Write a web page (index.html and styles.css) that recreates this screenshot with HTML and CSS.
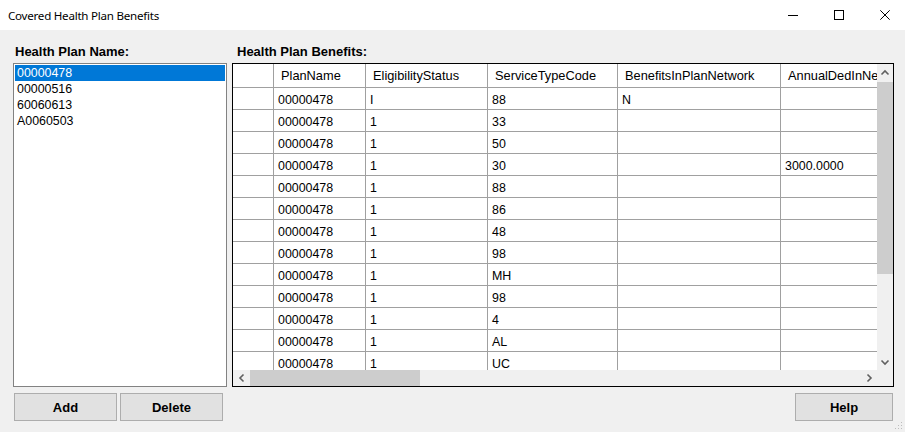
FILE: index.html
```html
<!DOCTYPE html>
<html>
<head>
<meta charset="utf-8">
<title>Covered Health Plan Benefits</title>
<link rel="stylesheet" href="styles.css">
</head>
<body>
<div class="window">
  <div class="titlebar">
    <span class="title">Covered Health Plan Benefits</span>
    <div class="controls">
      <span class="ctl"><svg width="10" height="10" viewBox="0 0 10 10"><line x1="0" y1="5.5" x2="10" y2="5.5" stroke="#000" stroke-width="1"/></svg></span>
      <span class="ctl"><svg width="10" height="10" viewBox="0 0 10 10"><rect x="0.5" y="0.5" width="9" height="9" fill="none" stroke="#000" stroke-width="1"/></svg></span>
      <span class="ctl"><svg width="10" height="10" viewBox="0 0 10 10"><path d="M0.3 0.3 L9.7 9.7 M9.7 0.3 L0.3 9.7" stroke="#000" stroke-width="1" fill="none"/></svg></span>
    </div>
  </div>
  <div class="main">
    <div class="col left">
      <div class="label">Health Plan Name:</div>
      <div class="listbox">
        <div class="item sel">00000478</div>
        <div class="item">00000516</div>
        <div class="item">60060613</div>
        <div class="item">A0060503</div>
      </div>
      <div class="btnrow">
        <button class="btn btn-wide">Add</button>
        <button class="btn btn-wide">Delete</button>
      </div>
    </div>
    <div class="col right">
      <div class="label label-grid">Health Plan Benefits:</div>
      <div class="grid">
        <div class="viewport">
          <div class="row head">
            <div class="cell c0"></div>
            <div class="cell c1">PlanName</div>
            <div class="cell c2">EligibilityStatus</div>
            <div class="cell c3">ServiceTypeCode</div>
            <div class="cell c4">BenefitsInPlanNetwork</div>
            <div class="cell c5">AnnualDedInNetwork</div>
          </div>
          <div class="row"><div class="cell c0"></div><div class="cell c1">00000478</div><div class="cell c2">I</div><div class="cell c3">88</div><div class="cell c4">N</div><div class="cell c5"></div></div>
          <div class="row"><div class="cell c0"></div><div class="cell c1">00000478</div><div class="cell c2">1</div><div class="cell c3">33</div><div class="cell c4"></div><div class="cell c5"></div></div>
          <div class="row"><div class="cell c0"></div><div class="cell c1">00000478</div><div class="cell c2">1</div><div class="cell c3">50</div><div class="cell c4"></div><div class="cell c5"></div></div>
          <div class="row"><div class="cell c0"></div><div class="cell c1">00000478</div><div class="cell c2">1</div><div class="cell c3">30</div><div class="cell c4"></div><div class="cell c5">3000.0000</div></div>
          <div class="row"><div class="cell c0"></div><div class="cell c1">00000478</div><div class="cell c2">1</div><div class="cell c3">88</div><div class="cell c4"></div><div class="cell c5"></div></div>
          <div class="row"><div class="cell c0"></div><div class="cell c1">00000478</div><div class="cell c2">1</div><div class="cell c3">86</div><div class="cell c4"></div><div class="cell c5"></div></div>
          <div class="row"><div class="cell c0"></div><div class="cell c1">00000478</div><div class="cell c2">1</div><div class="cell c3">48</div><div class="cell c4"></div><div class="cell c5"></div></div>
          <div class="row"><div class="cell c0"></div><div class="cell c1">00000478</div><div class="cell c2">1</div><div class="cell c3">98</div><div class="cell c4"></div><div class="cell c5"></div></div>
          <div class="row"><div class="cell c0"></div><div class="cell c1">00000478</div><div class="cell c2">1</div><div class="cell c3">MH</div><div class="cell c4"></div><div class="cell c5"></div></div>
          <div class="row"><div class="cell c0"></div><div class="cell c1">00000478</div><div class="cell c2">1</div><div class="cell c3">98</div><div class="cell c4"></div><div class="cell c5"></div></div>
          <div class="row"><div class="cell c0"></div><div class="cell c1">00000478</div><div class="cell c2">1</div><div class="cell c3">4</div><div class="cell c4"></div><div class="cell c5"></div></div>
          <div class="row"><div class="cell c0"></div><div class="cell c1">00000478</div><div class="cell c2">1</div><div class="cell c3">AL</div><div class="cell c4"></div><div class="cell c5"></div></div>
          <div class="row"><div class="cell c0"></div><div class="cell c1">00000478</div><div class="cell c2">1</div><div class="cell c3">UC</div><div class="cell c4"></div><div class="cell c5"></div></div>
        </div>
        <div class="vscroll">
          <div class="arrow arrow-v-top"><svg width="16" height="16" viewBox="0 0 16 16"><polyline points="4.5,9.5 8,6 11.5,9.5" fill="none" stroke="#606060" stroke-width="1.6"/></svg></div>
          <div class="vthumb"></div>
          <div class="vtrack"></div>
          <div class="arrow arrow-v-bottom"><svg width="16" height="16" viewBox="0 0 16 16"><polyline points="4.5,6.5 8,10 11.5,6.5" fill="none" stroke="#606060" stroke-width="1.6"/></svg></div>
        </div>
        <div class="hscroll">
          <div class="arrow arrow-h"><svg width="16" height="16" viewBox="0 0 16 16"><polyline points="9.5,4.5 6,8 9.5,11.5" fill="none" stroke="#606060" stroke-width="1.6"/></svg></div>
          <div class="hthumb"></div>
          <div class="htrack"></div>
          <div class="arrow arrow-h"><svg width="16" height="16" viewBox="0 0 16 16"><polyline points="6.5,4.5 10,8 6.5,11.5" fill="none" stroke="#606060" stroke-width="1.6"/></svg></div>
        </div>
        <div class="corner"></div>
      </div>
      <div class="btnrow btnrow-end">
        <button class="btn btn-help">Help</button>
      </div>
    </div>
  </div>
  <svg class="grip" width="8" height="8" viewBox="0 0 8 8">
    <rect x="6" y="0" width="1" height="1" fill="#bcbcbc"/>
    <rect x="3" y="3" width="1" height="1" fill="#bcbcbc"/>
    <rect x="6" y="3" width="1" height="1" fill="#bcbcbc"/>
    <rect x="0" y="6" width="1" height="1" fill="#bcbcbc"/>
    <rect x="3" y="6" width="1" height="1" fill="#bcbcbc"/>
    <rect x="6" y="6" width="1" height="1" fill="#bcbcbc"/>
  </svg>
</div>
</body>
</html>
```

FILE: styles.css
```css
html, body {
  margin: 0;
  padding: 0;
}
body {
  width: 905px;
  height: 432px;
  overflow: hidden;
  background: #f0f0f0;
  font-family: "Liberation Sans", Arial, sans-serif;
  color: #000;
}
.window {
  position: relative;
  width: 905px;
  height: 432px;
  overflow: hidden;
}
.titlebar {
  height: 30px;
  background: #fff;
  display: flex;
  align-items: center;
  justify-content: space-between;
}
.title {
  font-family: "Noto Sans", "Open Sans", sans-serif;
  font-size: 11.6px;
  padding-left: 8px;
  letter-spacing: -0.25px;
}
.controls {
  display: flex;
  height: 30px;
  margin-right: -3px;
}
.ctl {
  width: 46px;
  height: 30px;
  display: flex;
  align-items: center;
  justify-content: center;
}
.main {
  display: flex;
  padding: 12px 0 0 13px;
  gap: 5px;
}
.col {
  display: flex;
  flex-direction: column;
}
.left {
  width: 214px;
}
.right {
  width: 662px;
}
.label {
  height: 21px;
  line-height: 20px;
  font-weight: bold;
  font-size: 13px;
  padding-left: 2px;
}
.label-grid {
  padding-left: 5px;
}
.listbox {
  box-sizing: border-box;
  height: 324px;
  background: #fff;
  border: 1px solid #828282;
  padding: 1px;
}
.item {
  height: 16px;
  line-height: 16px;
  font-size: 12.4px;
  padding-left: 2px;
}
.item.sel {
  background: #0078d7;
  color: #fff;
}
.btnrow {
  display: flex;
  gap: 3px;
  margin-top: 6px;
  padding-left: 1px;
}
.btnrow-end {
  justify-content: flex-end;
  padding-left: 0;
  padding-right: 1px;
}
.btn {
  box-sizing: border-box;
  height: 28px;
  background: #e1e1e1;
  border: 1px solid #adadad;
  font-family: "Liberation Sans", Arial, sans-serif;
  font-weight: bold;
  font-size: 13px;
  color: #000;
  padding: 0;
}
.btn-wide {
  width: 103px;
}
.btn-help {
  width: 98px;
}
.grid {
  box-sizing: border-box;
  height: 324px;
  border: 1px solid #000;
  background: #fff;
  display: grid;
  grid-template-columns: 1fr 16px;
  grid-template-rows: 1fr 16px;
}
.viewport {
  overflow: hidden;
  background: #fff;
}
.row {
  display: flex;
  height: 22px;
}
.row.head {
  height: 24px;
}
.cell {
  flex: none;
  box-sizing: border-box;
  border-right: 1px solid #a0a0a0;
  border-bottom: 1px solid #a0a0a0;
  white-space: nowrap;
  overflow: hidden;
  font-size: 12.4px;
  line-height: 20px;
  padding-top: 2px;
  padding-left: 4px;
}
.head .cell {
  font-size: 12.8px;
  line-height: 22px;
  padding-top: 1px;
  padding-left: 7px;
}
.c0 { width: 41px; }
.c1 { width: 92px; }
.c2 { width: 122px; }
.c3 { width: 130px; }
.c4 { width: 163px; }
.c5 { width: 140px; }
.vscroll {
  background: #f0f0f0;
  display: flex;
  flex-direction: column;
}
.arrow {
  flex: none;
  display: flex;
  align-items: center;
  justify-content: center;
}
.arrow-v-top {
  height: 18px;
}
.arrow-v-bottom {
  height: 17px;
}
.vthumb {
  height: 192px;
  background: #cdcdcd;
}
.vtrack {
  flex: 1;
}
.hscroll {
  background: #f0f0f0;
  display: flex;
}
.arrow-h {
  width: 17px;
}
.hthumb {
  width: 170px;
  background: #cdcdcd;
}
.htrack {
  flex: 1;
}
.corner {
  background: #f0f0f0;
}
.grip {
  position: absolute;
  right: 2px;
  bottom: 2px;
}
```
